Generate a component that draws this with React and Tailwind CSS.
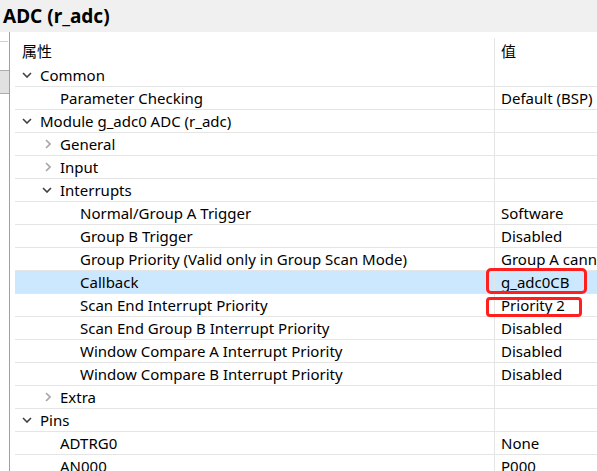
import React from 'react'

const rows = [
  { level: 0, icon: 'down', label: 'Common' },
  { level: 1, label: 'Parameter Checking', value: 'Default (BSP)' },
  { level: 0, icon: 'down', label: 'Module g_adc0 ADC (r_adc)' },
  { level: 1, icon: 'right', label: 'General' },
  { level: 1, icon: 'right', label: 'Input' },
  { level: 1, icon: 'down', label: 'Interrupts' },
  { level: 2, label: 'Normal/Group A Trigger', value: 'Software' },
  { level: 2, label: 'Group B Trigger', value: 'Disabled' },
  { level: 2, label: 'Group Priority (Valid only in Group Scan Mode)', value: 'Group A cannot interrupt Group B' },
  { level: 2, label: 'Callback', value: 'g_adc0CB', selected: true, mark: 'cb' },
  { level: 2, label: 'Scan End Interrupt Priority', value: 'Priority 2', mark: 'pr' },
  { level: 2, label: 'Scan End Group B Interrupt Priority', value: 'Disabled' },
  { level: 2, label: 'Window Compare A Interrupt Priority', value: 'Disabled' },
  { level: 2, label: 'Window Compare B Interrupt Priority', value: 'Disabled' },
  { level: 1, icon: 'right', label: 'Extra' },
  { level: 0, icon: 'down', label: 'Pins' },
  { level: 1, label: 'ADTRG0', value: 'None' },
  { level: 1, label: 'AN000', value: 'P000' },
]

const indent = ['pl-[7px]', 'pl-[27px]', 'pl-[47px]']

const Chevron = ({ type }) => {
  if (type === 'down')
    return (
      <svg width="10" height="6" viewBox="0 0 10 6" className="block">
        <path d="M1 1 L5 5 L9 1" fill="none" stroke="#404040" strokeWidth="1.6" />
      </svg>
    )
  if (type === 'right')
    return (
      <svg width="6" height="10" viewBox="0 0 6 10" className="ml-[3px] block">
        <path d="M1 1 L5 5 L1 9" fill="none" stroke="#a6a6a6" strokeWidth="1.6" />
      </svg>
    )
  return null
}

const Row = ({ row }) => (
  <div
    className={`grid h-[23px] grid-cols-[479px_1fr] border-b border-[#e5e5e5] ${
      row.selected ? 'bg-[#cce8ff]' : ''
    }`}>
    <div className={`flex items-center whitespace-nowrap ${indent[row.level]}`}>
      <div className="flex w-[18px] items-center">
        <Chevron type={row.icon} />
      </div>
      <span>{row.label}</span>
    </div>
    <div className="relative flex items-center overflow-visible whitespace-nowrap border-l border-[#e5e5e5] pl-[6px]">
      <span className="overflow-hidden">{row.value}</span>
      {row.mark === 'cb' && (
        <div className="absolute -top-[3px] left-[-9px] h-[26px] w-[101px] rounded-[5px] border-[3px] border-[#ff1f1f]" />
      )}
      {row.mark === 'pr' && (
        <div className="absolute top-[3px] left-[-9px] h-[20px] w-[96px] rounded-[4px] border-[3px] border-[#ff1f1f]" />
      )}
    </div>
  </div>
)

export default function App() {
  return (
    <div className="flex h-[471px] w-[597px] flex-col overflow-hidden bg-white font-['Noto_Sans','Noto_Sans_CJK_SC',sans-serif] text-[15px] text-black">
      <div className="h-[32px] shrink-0 bg-[#f0f0f0] pl-[3px] text-[19px] leading-[32px] font-bold">
        ADC (r_adc)
      </div>

      <div className="flex min-h-0 flex-1">
        {/* side panel edge */}
        <div className="flex w-[10px] shrink-0 flex-col border-r border-[#a0a0a0]">
          <div className="h-[10px] w-[8px] border-b border-[#d0d0d0]" />
          <div className="mt-[28px] h-[24px] border-y border-[#adadad] bg-[#e1e1e1]" />
        </div>

        <div className="flex-1 overflow-hidden pl-[5px]">
          <div className="grid h-[32px] grid-cols-[479px_1fr] pt-[6px]">
            <div className="flex items-center pl-[7px]">属性</div>
            <div className="flex items-center border-l border-[#e5e5e5] pl-[6px]">值</div>
          </div>
          {rows.map((row, i) => (
            <Row key={i} row={row} />
          ))}
        </div>
      </div>
    </div>
  )
}
